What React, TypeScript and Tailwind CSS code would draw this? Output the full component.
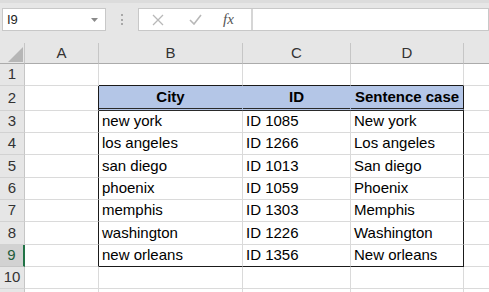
import React from 'react'

const rows: { n: number; h: string; cells: [string, string, string] | null }[] = [
  { n: 1, h: 'h-[22px]', cells: null },
  { n: 2, h: 'h-[25px]', cells: ['City', 'ID', 'Sentence case'] },
  { n: 3, h: 'h-[22px]', cells: ['new york', 'ID 1085', 'New york'] },
  { n: 4, h: 'h-[22px]', cells: ['los angeles', 'ID 1266', 'Los angeles'] },
  { n: 5, h: 'h-[23px]', cells: ['san diego', 'ID 1013', 'San diego'] },
  { n: 6, h: 'h-[22px]', cells: ['phoenix', 'ID 1059', 'Phoenix'] },
  { n: 7, h: 'h-[22px]', cells: ['memphis', 'ID 1303', 'Memphis'] },
  { n: 8, h: 'h-[23px]', cells: ['washington', 'ID 1226', 'Washington'] },
  { n: 9, h: 'h-[22px]', cells: ['new orleans', 'ID 1356', 'New orleans'] },
  { n: 10, h: 'h-[22px]', cells: null },
  { n: 11, h: 'h-[22px]', cells: null },
]

const widths = ['w-[74px]', 'w-[144px]', 'w-[108px]', 'w-[113px]', 'w-[100px]']

function cellClass(row: number, col: number) {
  // col: 0=A 1=B 2=C 3=D 4=E ; only right/bottom borders are drawn
  const inTable = row >= 2 && row <= 9
  let right = 'border-r-[#dadada]'
  let bottom = 'border-b border-b-[#dadada]'
  let bg = 'bg-white'
  if (inTable && (col === 0 || col === 3)) right = 'border-r-[#1a1a1a]'
  if (row === 1 && col >= 1 && col <= 3) bottom = 'border-b border-b-[#1a1a1a]'
  if (row === 9 && col >= 1 && col <= 3) bottom = 'border-b border-b-[#1a1a1a]'
  if (row === 2 && col >= 1 && col <= 3) {
    bg = 'bg-[#b4c6e7]'
    bottom = 'border-b-[3px] border-double border-b-[#2a2a2a]'
    if (col !== 3) right = 'border-r-[#b4c6e7]'
  }
  return `${widths[col]} shrink-0 border-r ${right} ${bottom} ${bg}`
}

function Corner() {
  return (
    <div className="w-[25px] h-[21px] shrink-0 bg-[#e6e6e6] border-r border-r-[#c6c6c6] border-b border-b-[#ababab] relative">
      <svg width="25" height="21" className="absolute left-0 top-0">
        <polygon points="23,4 23,19 8,19" fill="#b6b6b6" />
      </svg>
    </div>
  )
}

export default function App() {
  return (
    <div
      className="w-[489px] h-[292px] overflow-hidden bg-white text-[#000]"
      style={{ fontFamily: '"Liberation Sans", Arial, sans-serif' }}
    >
      {/* formula bar */}
      <div className="h-[43px] bg-[#e6e6e6] border-t-[3px] border-t-[#dcdcdc]">
        <div className="flex items-start pt-[5px]">
          <div className="ml-[2px] w-[104px] h-[23px] bg-white border border-[#c8c8c8] flex items-center justify-between pl-[4px] pr-[7px]">
            <span className="text-[13px] text-[#222]">I9</span>
            <svg width="7" height="4"><polygon points="0,0 7,0 3.5,4" fill="#8a8a8a" /></svg>
          </div>
          <div className="w-[32px] h-[23px] flex flex-col items-center justify-center gap-[2.5px]">
            <span className="w-[2px] h-[2px] bg-[#a8a8a8]" />
            <span className="w-[2px] h-[2px] bg-[#a8a8a8]" />
            <span className="w-[2px] h-[2px] bg-[#a8a8a8]" />
          </div>
          <div className="flex-1 h-[23px] bg-white border border-[#c8c8c8] flex items-center">
            <div className="w-[114px] h-full flex items-center border-r-[2px] border-r-[#d6d6d6]">
              <svg width="12" height="12" className="ml-[13px]">
                <path d="M1 1 L11 11 M11 1 L1 11" stroke="#b8b8b8" strokeWidth="1.3" />
              </svg>
              <svg width="13" height="11" className="ml-[25px]">
                <path d="M1 6 L5 10 L12 1" stroke="#b8b8b8" strokeWidth="1.6" fill="none" />
              </svg>
              <span
                className="ml-[21px] text-[15px] italic text-[#555]"
                style={{ fontFamily: '"Liberation Serif", "Times New Roman", serif' }}
              >
                fx
              </span>
            </div>
          </div>
        </div>
      </div>

      {/* column headers */}
      <div className="flex">
        <Corner />
        {['A', 'B', 'C', 'D', ''].map((c, i) => (
          <div
            key={i}
            className={`${widths[i]} h-[21px] shrink-0 bg-[#e6e6e6] border-r border-r-[#c6c6c6] border-b border-b-[#ababab] flex items-center justify-center text-[15px] text-[#333]`}
          >
            {c}
          </div>
        ))}
      </div>

      {/* rows */}
      {rows.map((r) => (
        <div key={r.n} className={`flex ${r.h}`}>
          <div
            className={
              r.n === 9
                ? 'w-[25px] shrink-0 bg-[#d2d2d2] border-r-2 border-r-[#217346] border-b border-b-[#c6c6c6] flex items-center justify-center text-[15px] text-[#1e5c3a]'
                : 'w-[25px] shrink-0 bg-[#e6e6e6] border-r border-r-[#c6c6c6] border-b border-b-[#d2d2d2] flex items-center justify-center text-[15px] text-[#333]'
            }
          >
            {r.n <= 10 ? r.n : ''}
          </div>
          {[0, 1, 2, 3, 4].map((col) => {
            const text = r.cells && col >= 1 && col <= 3 ? r.cells[col - 1] : ''
            const header = r.n === 2
            return (
              <div
                key={col}
                className={`${cellClass(r.n, col)} flex items-center text-[15px] ${
                  header ? 'justify-center font-bold' : 'pl-[3px]'
                }`}
              >
                {text}
              </div>
            )
          })}
        </div>
      ))}
    </div>
  )
}
